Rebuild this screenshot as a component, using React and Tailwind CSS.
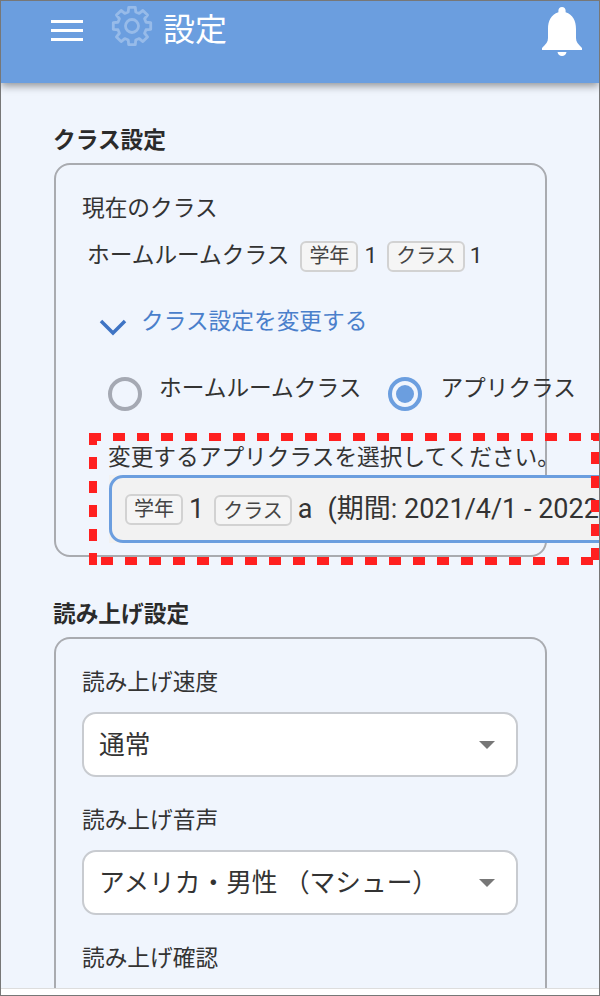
function gearPath(cx, cy, outer, inner, teeth) {
  const step = 360 / teeth;
  const pts = [];
  for (let i = 0; i < teeth; i++) {
    const a = i * step - 90;
    [[inner, -15], [outer, -10], [outer, 10], [inner, 15]].forEach(([r, d]) => {
      const rad = ((a + d) * Math.PI) / 180;
      pts.push(`${(cx + r * Math.cos(rad)).toFixed(2)} ${(cy + r * Math.sin(rad)).toFixed(2)}`);
    });
  }
  return `M${pts.join('L')}Z`;
}

function Tag({ children }) {
  return (
    <span className="inline-flex items-center h-[31px] px-[7px] rounded-[6px] border-2 border-[#d2d2d2] bg-[#f5f5f5] text-[20px] leading-none text-[#444]">
      {children}
    </span>
  );
}

function Radio({ checked }) {
  return (
    <span className={`flex shrink-0 items-center justify-center w-[34px] h-[34px] rounded-full border-[4px] ${checked ? 'border-[#6b9edf]' : 'border-[#a5a9b3]'}`}>
      {checked && <span className="w-[18px] h-[18px] rounded-full bg-[#6b9edf]" />}
    </span>
  );
}

function SelectBox({ children }) {
  return (
    <div className="flex items-center justify-between h-[65px] pl-[15px] pr-[21px] bg-white rounded-[14px] border-2 border-[#c8cbd0] text-[25.700px] text-[#333]">
      <span className="pt-[2px]">{children}</span>
      <span className="w-0 h-0 border-x-[8px] border-x-transparent border-t-[8px] border-t-[#777]" />
    </div>
  );
}

export default function App() {
  return (
    <div
      className="relative w-[600px] h-[996px] overflow-hidden bg-[#f0f5fd] border border-[#777] text-[#333]"
      style={{ fontFamily: 'Roboto, "Noto Sans CJK JP", sans-serif' }}
    >
      <header className="flex items-start h-[82px] bg-[#6b9edf] shadow-[0_3px_8px_rgba(0,0,0,0.4)] pl-[50px] pr-[17px] pt-[4px]">
        <div className="flex flex-col gap-[6px] w-[32px] mt-[15px]">
          <span className="h-[3px] bg-white" />
          <span className="h-[3px] bg-white" />
          <span className="h-[3px] bg-white" />
        </div>
        <svg className="ml-[28px]" width="42" height="42" viewBox="0 0 42 42" fill="none" stroke="#97bbe9" strokeWidth="2.800" strokeLinejoin="round">
          <path d={gearPath(21, 21, 19, 14.5, 8)} />
          <circle cx="21" cy="21" r="6.500" />
        </svg>
        <span className="ml-[10px] mt-[1px] text-[32px] leading-[48px] text-white">設定</span>
        <svg className="ml-auto mt-[2px]" width="40" height="50" viewBox="0 0 40 50" fill="white">
          <path d="M20 0c2.200 0 3.600 1.500 3.600 3.600v1.600C31 7.400 34 14 34 22v9c0 4 2 6 6 10v2H0v-2c4-4 6-6 6-10v-9C6 14 9 7.400 16.400 5.200V3.600C16.400 1.500 17.800 0 20 0z" />
          <path d="M15.500 45h9c-.4 2.600-2.200 4-4.500 4s-4.100-1.400-4.500-4z" />
        </svg>
      </header>

      <main className="pl-[53px] w-[546px]">
        <h2 className="mt-[42px] -ml-[1px] text-[22.700px] leading-[32px] font-bold text-[#2b2b2b]">クラス設定</h2>
        <section className="mt-[6px] h-[394px] rounded-[16px] border-2 border-[#a9abb0] pl-[26px]">
          <p className="mt-[28px] text-[22.700px] leading-[32px]">現在のクラス</p>
          <div className="flex items-center mt-[15px] ml-[5px] whitespace-nowrap text-[22.700px] leading-[32px]">
            <span>ホームルームクラス</span>
            <span className="ml-[11px]"><Tag>学年</Tag></span>
            <span className="ml-[6px]">1</span>
            <span className="ml-[10px]"><Tag>クラス</Tag></span>
            <span className="ml-[5px]">1</span>
          </div>
          <div className="flex items-start mt-[34px] ml-[16px] text-[22.700px] leading-[32px] text-[#4a7fcb]">
            <svg className="mt-[12px]" width="30" height="20" viewBox="0 0 30 20" fill="none" stroke="#3f74c4" strokeWidth="3.500">
              <path d="M3 3l12 12L27 3" />
            </svg>
            <span className="ml-[13px]">クラス設定を変更する</span>
          </div>
          <div className="flex items-center mt-[35px] ml-[26px] whitespace-nowrap text-[22.700px] leading-[32px]">
            <Radio />
            <span className="ml-[17px] mb-[10px]">ホームルームクラス</span>
            <span className="ml-[27px]"><Radio checked /></span>
            <span className="ml-[18px] mb-[10px]">アプリクラス</span>
          </div>
          <p className="mt-[27px] ml-[26px] whitespace-nowrap text-[22.700px] leading-[32px]">変更するアプリクラスを選択してください。</p>
        </section>

        <h2 className="mt-[42px] -ml-[1px] text-[22.700px] leading-[32px] font-bold text-[#2b2b2b]">読み上げ設定</h2>
        <section className="mt-[6px] h-[360px] rounded-t-[16px] border-2 border-b-0 border-[#a9abb0] pl-[26px] pr-[27px]">
          <p className="mt-[28px] text-[22.700px] leading-[32px]">読み上げ速度</p>
          <div className="mt-[13px]"><SelectBox>通常</SelectBox></div>
          <p className="mt-[28px] text-[22.700px] leading-[32px]">読み上げ音声</p>
          <div className="mt-[13px]"><SelectBox>アメリカ・男性 （マシュー）</SelectBox></div>
          <p className="mt-[28px] text-[22.700px] leading-[32px]">読み上げ確認</p>
        </section>
      </main>

      {/* focused input runs off the right edge */}
      <div className="absolute left-[108px] top-[474px] w-[520px] h-[68px] bg-[#f2f2f2]">
        <div className="flex items-center h-full pl-[13px] bg-[#f2f2f2] rounded-[14px] border-[3px] border-[#6b9edf] whitespace-nowrap text-[27px]">
          <Tag>学年</Tag>
          <span className="ml-[6px]">1</span>
          <span className="ml-[10px]"><Tag>クラス</Tag></span>
          <span className="ml-[6px]">a</span>
          <span className="ml-[15px]">(期間: 2021/4/1 - 2022/3/31)</span>
        </div>
      </div>

      {/* red annotation, dash phase differs per side */}
      <svg className="absolute left-[88px] top-[432px]" width="510" height="132" fill="none" stroke="#ff2020" strokeWidth="8" strokeDasharray="12 12">
        <path d="M0 4H510" />
        <path d="M4 0V132" />
        <path d="M506 0V132" strokeDashoffset="5" />
        <path d="M12 128H510" />
      </svg>

      <div className="absolute left-0 right-0 bottom-0 h-[7px] bg-white border-t border-[#ddd]" />
    </div>
  );
}
